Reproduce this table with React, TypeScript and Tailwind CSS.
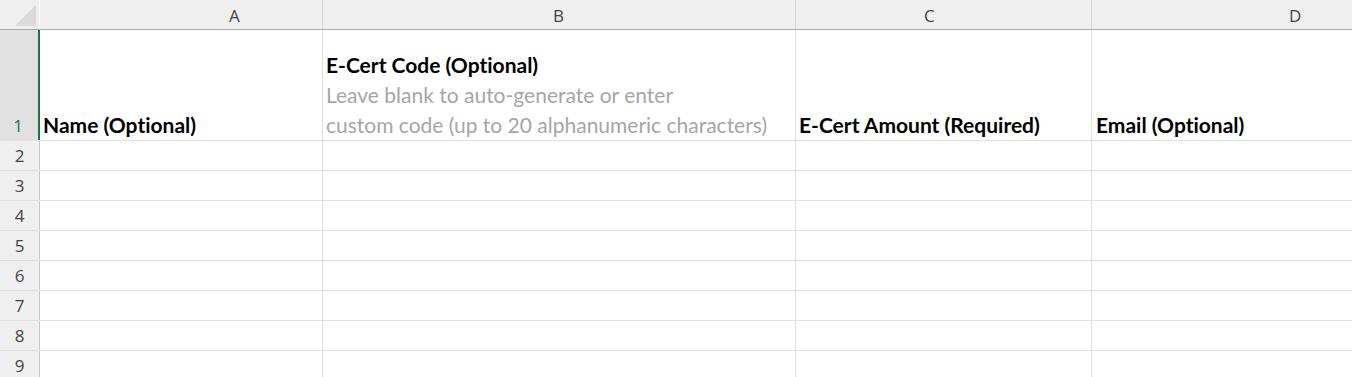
import React from "react";

const cellFont = { fontFamily: "Lato, 'Noto Sans', sans-serif" };
const uiFont = { fontFamily: "'Open Sans', 'Noto Sans', sans-serif" };

type Col = { letter: string; w: string; pl: string };

const columns: Col[] = [
  { letter: "A", w: "w-[283px]", pl: "pl-[189px]" },
  { letter: "B", w: "w-[473px]", pl: "pl-[230px]" },
  { letter: "C", w: "w-[296px]", pl: "pl-[128px]" },
  { letter: "D", w: "flex-1", pl: "pl-[197px]" },
];

function HeaderRow() {
  return (
    <div className="flex shrink-0 h-[30px] border-b border-[#ababab] bg-[#efefef]" style={uiFont}>
      <div className="relative w-[40px] shrink-0 border-r border-[#fafafa]">
        <svg className="absolute left-[15px] top-[5px]" width="22" height="21" viewBox="0 0 22 21">
          <polygon points="21,0 21,21 0,21" fill="#dadada" />
        </svg>
      </div>
      {columns.map((c, i) => (
        <div
          key={c.letter}
          className={`${c.w} ${c.pl} shrink-0 flex items-end pb-[3px] text-[17px] leading-[20px] text-[#444] ${
            i < 3 ? "border-r border-[#d5d5d5]" : ""
          }`}
        >
          {c.letter}
        </div>
      ))}
    </div>
  );
}

function HeadingRow() {
  return (
    <div className="flex shrink-0 h-[111px] border-b border-[#e1e1e1]">
      <div
        className="w-[40px] shrink-0 flex items-end justify-center pb-[4px] pr-[2px] bg-[#e1e1e1] border-r-2 border-[#217346] text-[17px] leading-[20px] text-[#217346]"
        style={uiFont}
      >
        1
      </div>
      <div
        className="flex flex-1 text-[21px] leading-[30px] text-black [font-variant-ligatures:none]"
        style={cellFont}
      >
        <div className="w-[283px] shrink-0 flex items-end pl-[3px] border-r border-[#e1e1e1] font-bold">
          Name (Optional)
        </div>
        <div className="w-[473px] shrink-0 flex flex-col justify-end pl-[3px] border-r border-[#e1e1e1] whitespace-nowrap">
          <span className="font-bold">E-Cert Code (Optional)</span>
          <span className="text-[#a6a6a6]">Leave blank to auto-generate or enter</span>
          <span className="text-[#a6a6a6]">custom code (up to 20 alphanumeric characters)</span>
        </div>
        <div className="w-[296px] shrink-0 flex items-end pl-[3px] border-r border-[#e1e1e1] font-bold">
          E-Cert Amount (Required)
        </div>
        <div className="flex-1 flex items-end pl-[4px] font-bold">Email (Optional)</div>
      </div>
    </div>
  );
}

function BodyRow({ n }: { n: number }) {
  return (
    <div className="flex h-[30px] shrink-0 border-b border-[#e1e1e1]">
      <div
        className="w-[40px] shrink-0 flex items-center justify-center bg-[#efefef] border-r border-[#c6c6c6] text-[17px] leading-[20px] text-[#444]"
        style={uiFont}
      >
        {n}
      </div>
      <div className="w-[283px] shrink-0 border-r border-[#e1e1e1]" />
      <div className="w-[473px] shrink-0 border-r border-[#e1e1e1]" />
      <div className="w-[296px] shrink-0 border-r border-[#e1e1e1]" />
      <div className="flex-1" />
    </div>
  );
}

export default function App() {
  return (
    <div className="w-[1352px] h-[377px] overflow-hidden bg-white flex flex-col">
      <HeaderRow />
      <HeadingRow />
      {[2, 3, 4, 5, 6, 7, 8, 9].map((n) => (
        <BodyRow key={n} n={n} />
      ))}
    </div>
  );
}
